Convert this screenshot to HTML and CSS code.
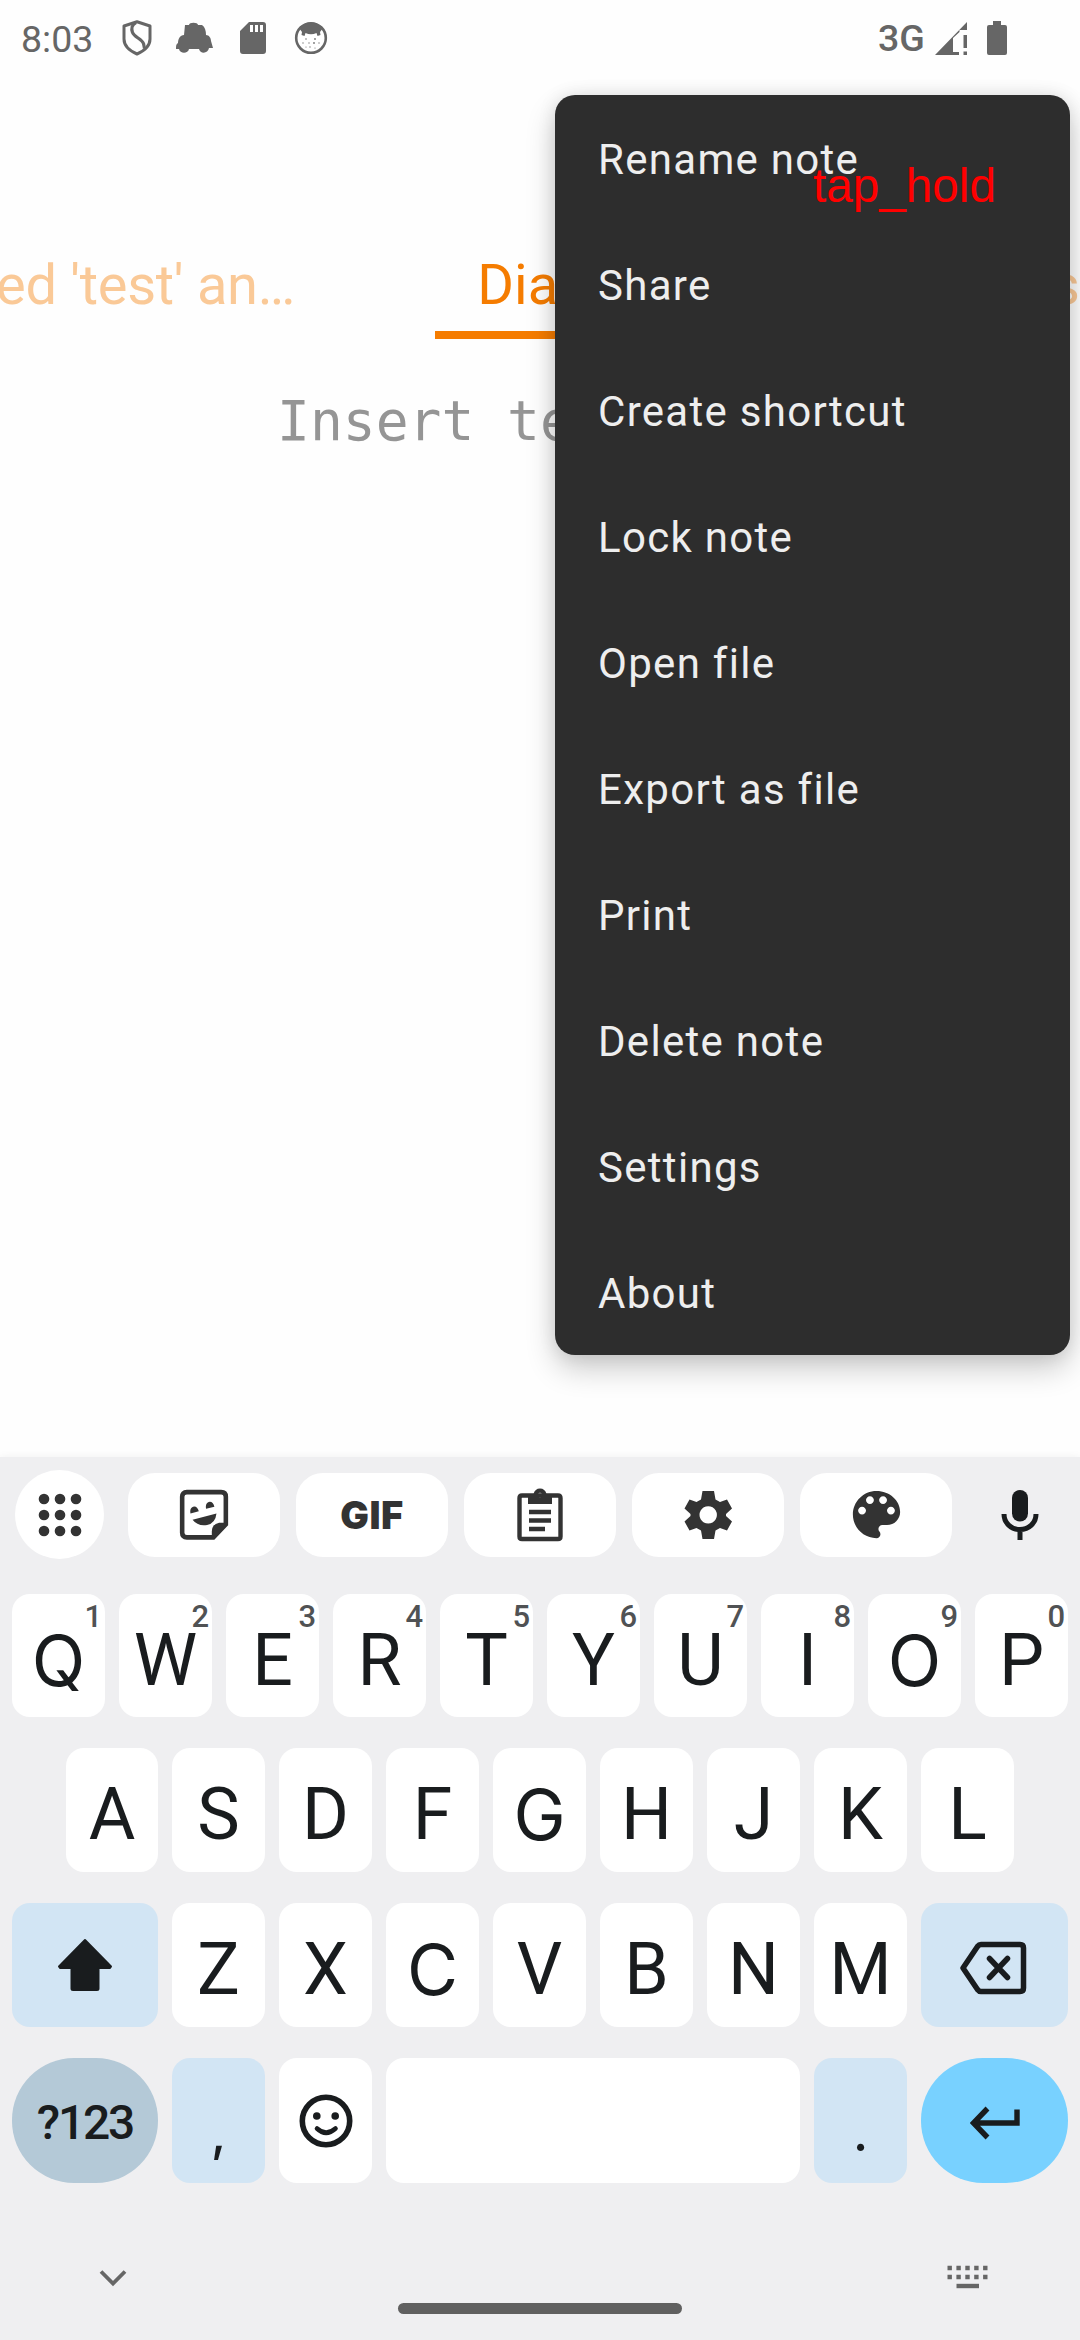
FILE: index.html
```html
<!DOCTYPE html>
<html lang="en">
<head>
<meta charset="utf-8">
<title>Notepad</title>
<link rel="stylesheet" href="styles.css">
</head>
<body>
<header class="status">
  <span class="clock">8:03</span>
  <svg class="st-shield" width="30" height="36" viewBox="0 0 30 36"><path d="M15 1.800 28 6v13c0 7-6 12-13 15C8 31 2 26 2 19V6Z" fill="none" stroke="#666" stroke-width="3" stroke-linejoin="round"/><path d="M14 2.500c-4 2-5 6-3.500 10 2 5 9 6 11 11l1 5" fill="none" stroke="#666" stroke-width="3.200"/></svg>
  <svg class="st-car" width="38" height="32" viewBox="0 0 38 32"><path d="M10 3h4c0-3 9-3 9 0h4c3 2 4 6 4 10 3 0 5 3 5 6l2 7h-4c-1 6-9 6-10 1H14c-1 5-9 5-10 0H1c0-3 0-5 2-6 0-4 2-8 6-8Z" fill="#666"/></svg>
  <svg class="st-sd" width="26" height="32" viewBox="0 0 26 32"><path fill="#666" fill-rule="evenodd" d="M9 0h14q3 0 3 3v26q0 3-3 3H3q-3 0-3-3V9ZM10 3v7h3V3ZM15 3v7h3V3ZM20 3v7h3V3Z"/></svg>
  <svg class="st-face" width="34" height="34" viewBox="0 0 34 34"><circle cx="17" cy="17" r="14.800" fill="#fff" stroke="#666" stroke-width="2.600"/><path d="M5 7q12-11 24 0l-3 4 .5 3-3 1-1-3q-5.500 2.500-11 0l-1 3-3-1 .5-3Z" fill="#666"/><g fill="#777"><circle cx="12" cy="18" r=".8"/><circle cx="21" cy="18" r=".9"/><circle cx="9" cy="22" r=".7"/><circle cx="15" cy="22" r=".7"/><circle cx="20" cy="22" r=".9"/><circle cx="25" cy="22" r=".7"/><circle cx="16" cy="26" r=".7"/><circle cx="12" cy="26" r=".6"/><circle cx="21" cy="27" r=".6"/></g></svg>
  <span class="net">3G</span>
  <svg class="st-signal" width="33" height="33" viewBox="0 0 33 33"><path fill="#666" d="M0 33 32 0v8h-7.500v2L18 16v14h6v3ZM28.500 13H32v13h-3.500ZM28.500 29.500H32V33h-3.500Z"/></svg>
  <svg class="st-batt" width="20" height="34" viewBox="0 0 20 34"><path fill="#666" d="M6 0h8v4h4q2 0 2 2v26q0 2-2 2H2q-2 0-2-2V6q0-2 2-2h4Z"/></svg>
</header>

<main class="note">
  <nav class="tabs">
    <div class="tab tab-prev">ed 'test' an…</div>
    <div class="tab tab-active">Diary</div>
    <div class="tab tab-next">s</div>
  </nav>
  <p class="editor">Insert text here</p>
</main>

<section class="keyboard">
  <div class="tools">
    <div class="apps"><svg width="44" height="44" viewBox="0 0 44 44" fill="#333"><circle cx="6" cy="6" r="5.300"/><circle cx="22" cy="6" r="5.300"/><circle cx="38" cy="6" r="5.300"/><circle cx="6" cy="22" r="5.300"/><circle cx="22" cy="22" r="5.300"/><circle cx="38" cy="22" r="5.300"/><circle cx="6" cy="38" r="5.300"/><circle cx="22" cy="38" r="5.300"/><circle cx="38" cy="38" r="5.300"/></svg></div>
    <div class="pills">
      <div class="pill"><svg width="52" height="52" viewBox="0 0 50 50"><path d="M8.500 3h33Q46 3 46 7.500V34L34 46.500H8.500Q4 46.500 4 42V7.500Q4 3 8.500 3Z" fill="none" stroke="#333" stroke-width="4.400"/><path d="M48 34 34 48h-1.500V41q0-7 7-8.500H48Z" fill="#333"/><path d="M12 23.500q-1-5 2.500-6.500 4-1 5.500 4.500ZM27 19q-1-5 2.500-6.500 4-1 5.500 4.500ZM14 29.500 37 23.500Q36 33 28 34.500 19 36 14 29.500Z" fill="#333"/></svg></div>
      <div class="pill"><span class="gif">GIF</span></div>
      <div class="pill"><svg class="clip" width="46" height="54" viewBox="0 0 46 54"><path d="M5 7.500h36q2.500 0 2.500 2.500v38.500q0 2.500-2.500 2.500H5q-2.500 0-2.500-2.500V10q0-2.500 2.500-2.500Z" fill="none" stroke="#333" stroke-width="4.400"/><path fill="#333" fill-rule="evenodd" d="M11 6h5.500q1.500-5.500 6.500-5.500T29.500 6H35v10H11ZM23 4.800a2.300 2.300 0 1 0 .01 0Z"/><path d="M12 24h22M12 32.500h22M12 41h16" stroke="#333" stroke-width="4.400"/></svg></div>
      <div class="pill"><svg width="48" height="50" viewBox="0 0 48 50" fill="#333"><path fill-rule="evenodd" d="M18.500 1h11.500l1.500 8.500 4.500 2.500 7-2.500 5 9L42 24v2l6 5.500-5 9-7-2.500-4.500 2.500L30 49H18.500L17 40.500 12.500 38l-7 2.500-5-9L6.500 26v-2L.5 18.500l5-9 7 2.500L17 9.500ZM24.200 16.200a8.700 8.700 0 1 0 .01 0Z"/></svg></div>
      <div class="pill"><svg width="63" height="63" viewBox="0 0 24 24" fill="#333"><path d="M12 3c-4.970 0-9 4.030-9 9s4.030 9 9 9c.83 0 1.500-.67 1.500-1.500 0-.39-.15-.74-.39-1.010-.23-.26-.38-.61-.38-.99 0-.83.67-1.500 1.500-1.500H16c2.760 0 5-2.240 5-5 0-4.420-4.030-8-9-8zm-5.500 9c-.83 0-1.500-.67-1.500-1.500S5.670 9 6.500 9 8 9.670 8 10.500 7.330 12 6.500 12zm3-4C8.670 8 8 7.330 8 6.500S8.670 5 9.500 5s1.500.67 1.500 1.500S10.330 8 9.500 8zm5 0c-.83 0-1.500-.67-1.500-1.500S13.670 5 14.500 5s1.500.67 1.500 1.500S15.330 8 14.500 8zm3 4c-.83 0-1.500-.67-1.500-1.500S16.670 9 17.500 9s1.500.67 1.500 1.500-.67 1.500-1.500 1.500z"/></svg></div>
    </div>
    <svg class="mic" width="38" height="50" viewBox="0 0 38 50"><rect x="11" y="0" width="16" height="31.500" rx="8" fill="#191c1e"/><path d="M3 24c0 9 7 15.500 16 15.500S35 33 35 24M19 39v11" fill="none" stroke="#191c1e" stroke-width="5"/></svg>
  </div>

  <div class="keys row1">
    <div class="key wide-o">Q<sup>1</sup></div><div class="key">W<sup>2</sup></div><div class="key">E<sup>3</sup></div><div class="key">R<sup>4</sup></div><div class="key">T<sup>5</sup></div><div class="key">Y<sup>6</sup></div><div class="key">U<sup>7</sup></div><div class="key">I<sup>8</sup></div><div class="key wide-o">O<sup>9</sup></div><div class="key">P<sup>0</sup></div>
  </div>
  <div class="keys row2">
    <div class="key">A</div><div class="key">S</div><div class="key">D</div><div class="key">F</div><div class="key wide-o">G</div><div class="key">H</div><div class="key">J</div><div class="key">K</div><div class="key">L</div>
  </div>
  <div class="keys row3">
    <div class="key mod"><svg width="56" height="54" viewBox="0 0 56 54"><path d="M28 2 54 28.500 53 30H41.500v20.500q0 1.500-1.500 1.500H16q-1.500 0-1.500-1.500V30H3l-1-1.500Z" fill="#191c1e" stroke="#191c1e" stroke-linejoin="round" stroke-width="2"/></svg></div>
    <div class="key">Z</div><div class="key">X</div><div class="key wide-o">C</div><div class="key">V</div><div class="key">B</div><div class="key">N</div><div class="key">M</div>
    <div class="key mod del"><svg width="68" height="54" viewBox="0 0 68 54" fill="none" stroke="#191c1e" stroke-width="5.500" stroke-linecap="round" stroke-linejoin="round"><path d="M22 3.500h39q3.500 0 3.500 3.500v40q0 3.500-3.500 3.500H22q-2 0-3.500-2L4 27 18.500 5.500q1.500-2 3.500-2ZM30.500 17.500 48.500 36.500M48.500 17.500 30.500 36.500"/></svg></div>
  </div>
  <div class="keys row4">
    <div class="key sym">?123</div>
    <div class="key mod punct">,</div>
    <div class="key emoji"><svg width="54" height="54" viewBox="0 0 54 54"><circle cx="27" cy="27" r="23.700" fill="none" stroke="#191c1e" stroke-width="5.600"/><circle cx="17.800" cy="22" r="3.800" fill="#191c1e"/><circle cx="36.200" cy="22" r="3.800" fill="#191c1e"/><path d="M18 34.500q9 8.500 18.500 0" fill="none" stroke="#191c1e" stroke-width="4.600" stroke-linecap="round"/></svg></div>
    <div class="key space"></div>
    <div class="key mod punct">.</div>
    <div class="key enter"><svg width="50" height="34" viewBox="0 0 50 34" fill="none" stroke="#191c1e" stroke-width="5.400"><path d="M47 3.500V17H4M17.500 2.500 3.500 17l14 14.500"/></svg></div>
  </div>

  <footer class="navbar">
    <svg class="hide" width="28" height="18" viewBox="0 0 28 18"><path d="M2 2.500 14 14.500 26 2.500" fill="none" stroke="#666" stroke-width="3.800"/></svg>
    <div class="handle"></div>
    <svg class="kbd" width="41" height="24" viewBox="0 0 41 24"><path d="M.5 3H41M.5 12H41" stroke="#666" stroke-width="4.400" stroke-dasharray="4.400 4.500"/><path d="M9.500 21H32" stroke="#666" stroke-width="4.400"/></svg>
  </footer>
</section>

<ul class="menu">
  <li>Rename note</li>
  <li>Share</li>
  <li>Create shortcut</li>
  <li>Lock note</li>
  <li>Open file</li>
  <li>Export as file</li>
  <li>Print</li>
  <li>Delete note</li>
  <li>Settings</li>
  <li>About</li>
</ul>
<span class="gesture">tap_hold</span>
</body>
</html>
```
FILE: styles.css
```css
* { box-sizing: border-box; }
body {
  margin: 0;
  width: 1080px;
  height: 2340px;
  position: relative;
  overflow: hidden;
  display: flex;
  flex-direction: column;
  background: #fefefe;
  font-family: Roboto, sans-serif;
}
svg { display: block; flex: none; }

.status {
  height: 76px;
  display: flex;
  align-items: center;
  padding-left: 21px;
  color: #666;
  font-size: 37px;
}
.clock { width: 101px; padding-top: 2px; font-size: 37.500px; }
.st-car { margin-left: 23px; }
.st-sd { margin-left: 27px; }
.st-face { margin-left: 28px; }
.net { margin-left: 550px; width: 57px; font-size: 37.500px; font-weight: 500; }
.st-batt { margin-left: 19px; }

.note { flex: 1; }
.tabs {
  height: 263px;
  display: flex;
  align-items: flex-end;
  font-size: 56px;
  line-height: 66px;
  color: #f57c00;
  white-space: nowrap;
  overflow: hidden;
}
.tab { padding-bottom: 13px; border-bottom: 8px solid transparent; }
.tab-prev { width: 435px; opacity: .4; margin-left: -4px; letter-spacing: -.300px; }
.tab-active { width: 208px; margin-left: 5px; padding-left: 42px; border-color: #f57c00; }
.tab-next { margin-left: 408px; opacity: .4; }
.editor {
  margin: 49px 0 0;
  text-align: center;
  font: 54.600px/66px "DejaVu Sans Mono", monospace;
  color: #959595;
}

.keyboard {
  height: 883px;
  background: #efeff1;
  box-shadow: 0 0 8px rgba(0, 0, 0, .06);
  display: flex;
  flex-direction: column;
}
.tools {
  display: flex;
  align-items: center;
  padding: 13px 0 0 15px;
  height: 102px;
}
.apps {
  width: 89px;
  height: 89px;
  border-radius: 50%;
  background: #fff;
  display: grid;
  place-items: center;
}
.pills { display: flex; gap: 16px; margin-left: 24px; }
.pill {
  width: 152px;
  height: 84px;
  border-radius: 27px;
  background: #fff;
  display: grid;
  place-items: center;
}
.gif { font: 900 38px/40px Inter, sans-serif; letter-spacing: .500px; color: #333; }
.mic { margin-left: 49px; }

.keys { display: flex; gap: 14px; padding: 0 12px; height: 124px; }
.row1 { margin-top: 35px; height: 123px; }
.row2 { margin-top: 31px; padding: 0 66px; }
.row3 { margin-top: 31px; }
.row4 { margin-top: 31px; height: 125px; }
.key {
  position: relative;
  flex: 0 0 93px;
  border-radius: 18px;
  background: #fff;
  color: #191c1e;
  font-size: 71.500px;
  line-height: 84px;
  display: flex;
  justify-content: center;
  padding-top: 25px;
}
.row2 .key:first-child { flex-basis: 92px; }
.wide-o { font-family: Inter, sans-serif; font-size: 70px; font-weight: 380; }
.key sup {
  position: absolute;
  top: 5px;
  right: 3px;
  font: 500 31px/36px Roboto, sans-serif;
  color: #505254;
}
.mod { background: #d2e5f4; }
.row3 .mod { flex: 1; padding: 0; align-items: center; }
.row3 .mod:first-child { flex: 0 0 146px; }
.row3 .del { padding: 5px 3px 0 0; }
.row4 .sym {
  flex-basis: 146px;
  border-radius: 62px;
  background: #b4c9d7;
  font-size: 48px;
  font-weight: 500;
  letter-spacing: -2.200px;
  align-items: center;
  padding: 4px 0 0;
}
.punct { font-family: Inter, sans-serif; font-size: 50px; font-weight: 500; padding-top: 33px; }
.emoji, .enter { align-items: center; padding: 0; }
.row4 .space { flex-basis: 414px; }
.row4 .enter { flex-basis: 147px; border-radius: 62px; background: #78d1ff; padding-top: 5px; }

.navbar { flex: 1; position: relative; display: flex; align-items: flex-start; }
.hide { margin: 86px 0 0 99px; }
.handle {
  width: 284px;
  height: 11px;
  margin: 120px 0 0 271px;
  border-radius: 6px;
  background: #606060;
}
.kbd { margin: 82px 0 0 265px; }

.menu {
  position: absolute;
  left: 555px;
  top: 95px;
  width: 515px;
  height: 1260px;
  margin: 0;
  padding: 0;
  list-style: none;
  border-radius: 20px;
  background: #2d2d2d;
  color: #eee;
  box-shadow: 0 14px 30px rgba(0, 0, 0, .2), 0 0 18px rgba(0, 0, 0, .1);
}
.menu li {
  height: 126px;
  padding-left: 43px;
  font-size: 42px;
  line-height: 130px;
  letter-spacing: 1.300px;
}
.gesture {
  position: absolute;
  left: 813px;
  top: 159px;
  font: 47.700px/54px "Liberation Sans", sans-serif;
  color: #f00;
}
```
